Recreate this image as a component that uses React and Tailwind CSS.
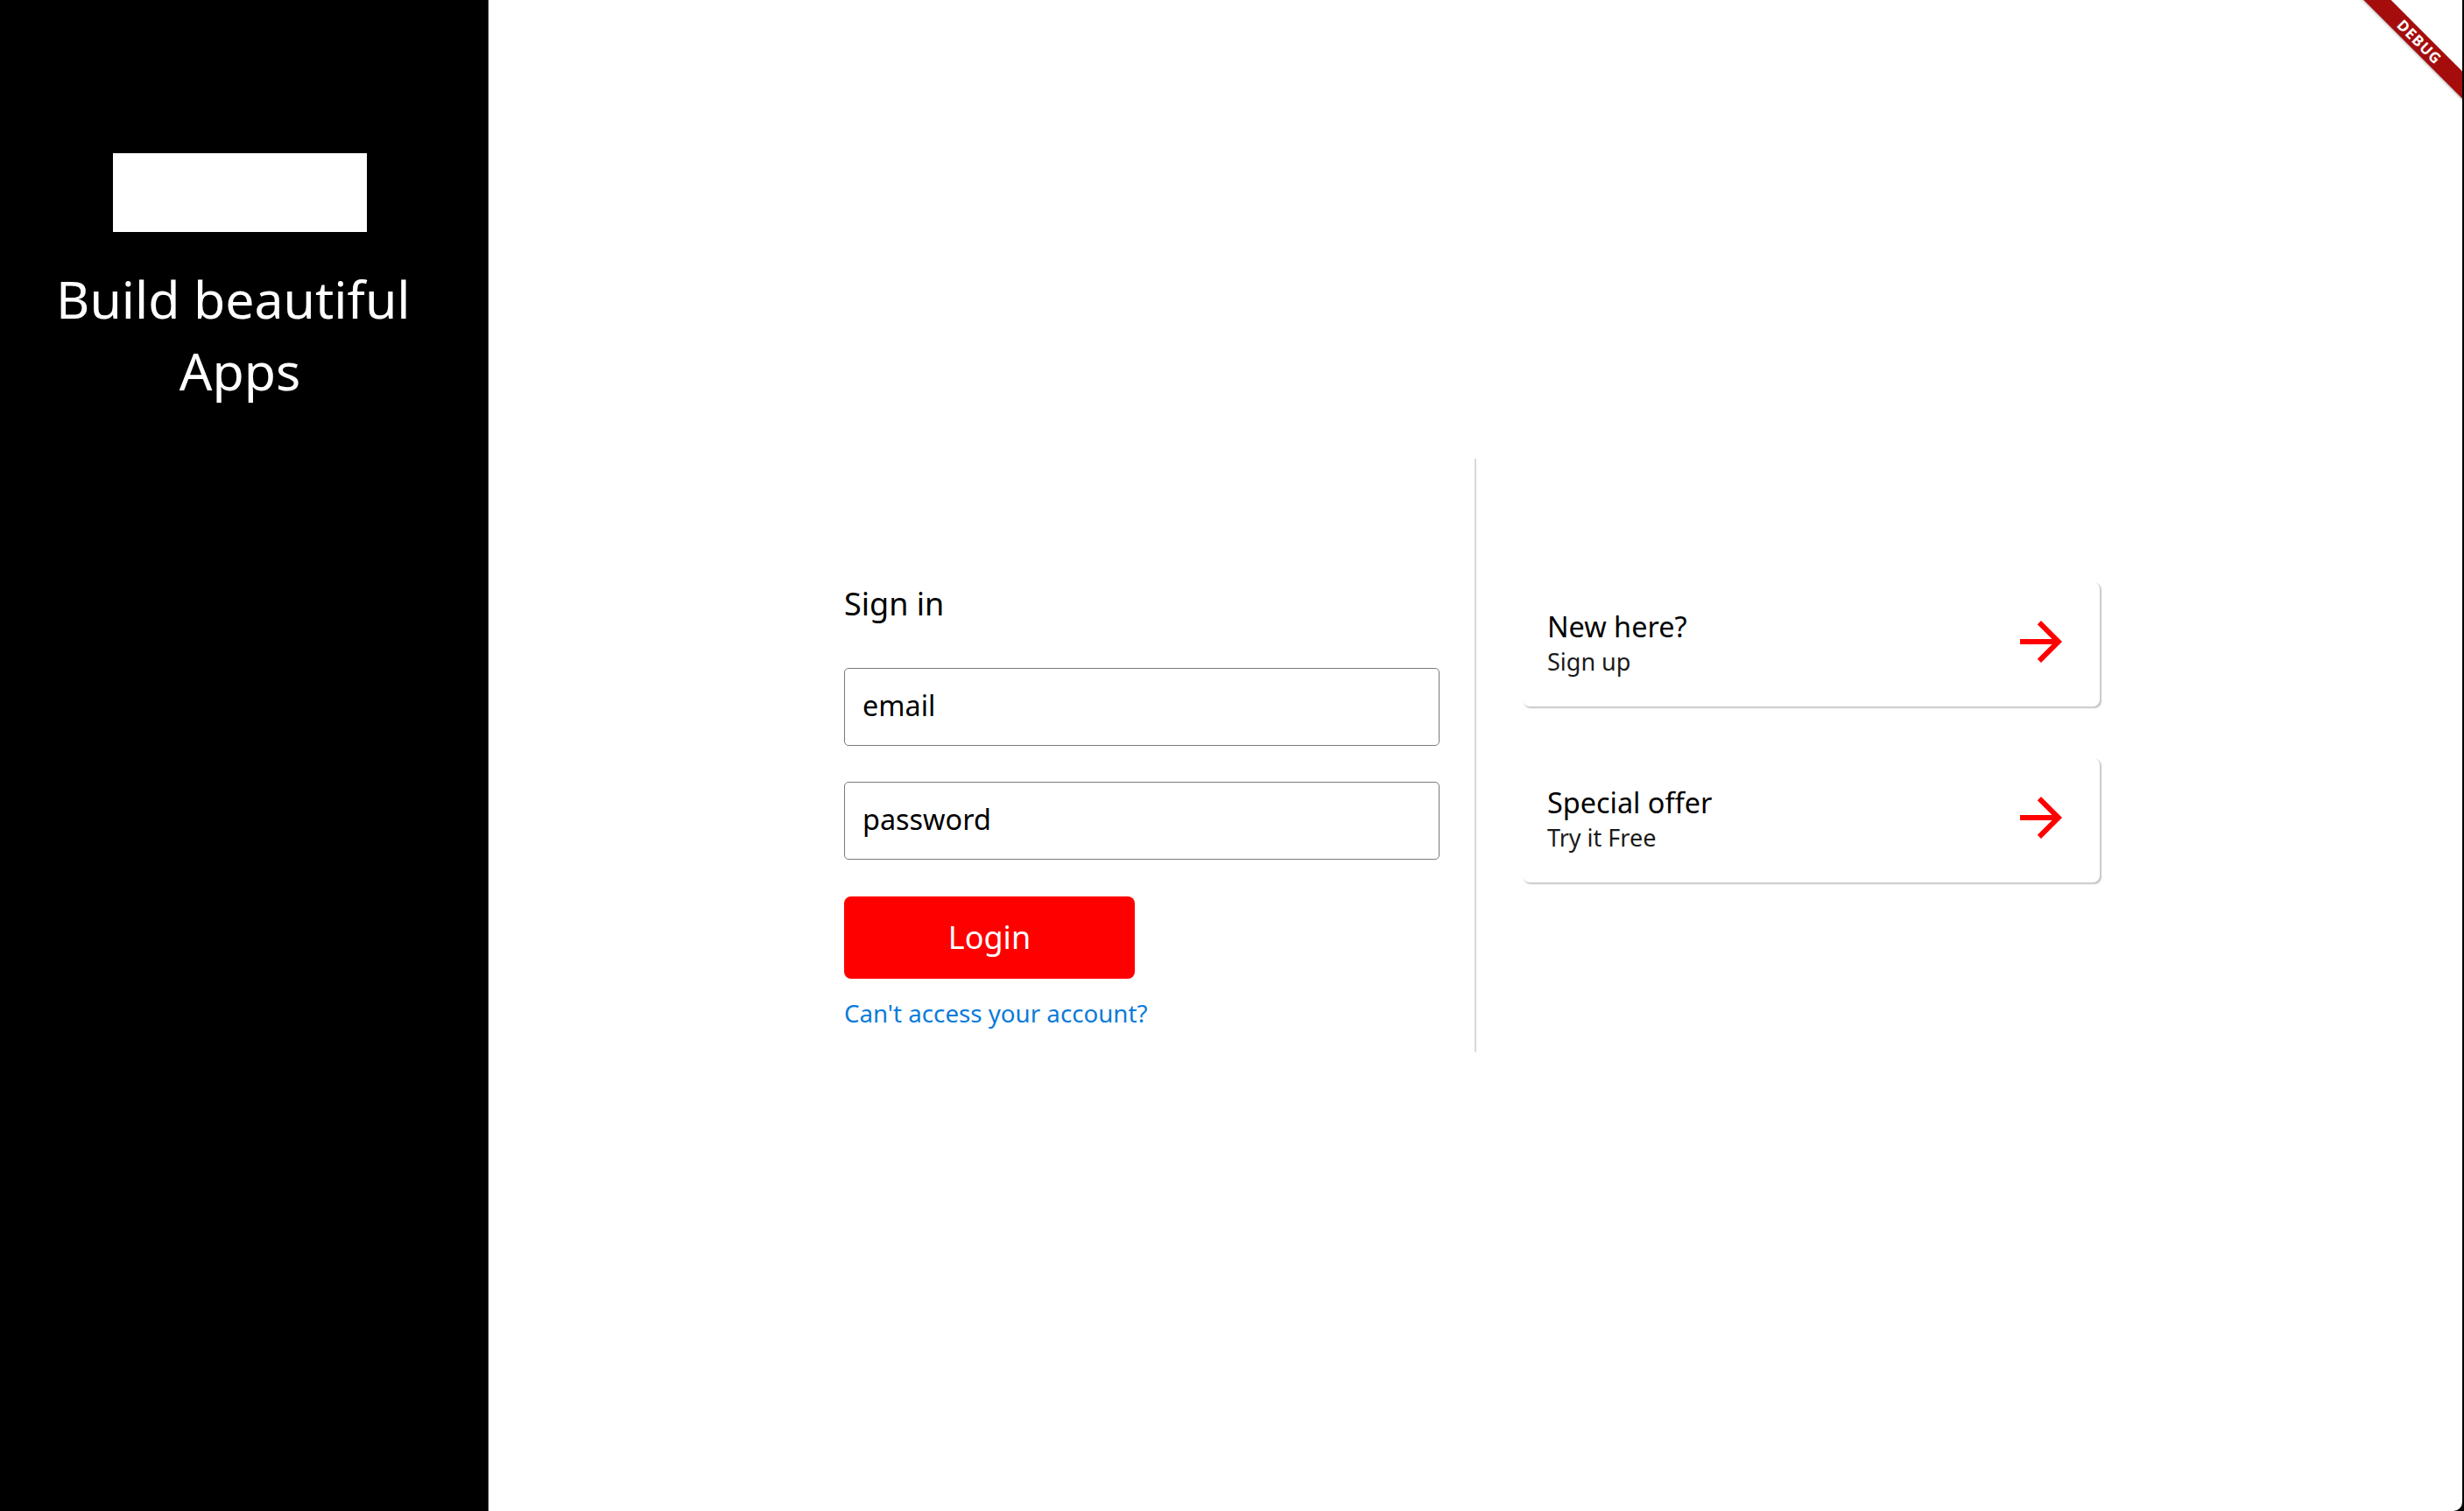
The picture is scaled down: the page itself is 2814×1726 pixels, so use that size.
import { useState } from 'react';

function ArrowForward() {
  return (
    <svg viewBox="0 0 24 24" className="h-[72px] w-[72px] shrink-0" fill="#ff0000">
      <path d="M12 4l-1.41 1.41L16.17 11H4v2h12.17l-5.58 5.59L12 20l8-8z" />
    </svg>
  );
}

function LinkCard({ title, subtitle }) {
  return (
    <button className="flex h-[142px] w-full items-center justify-between rounded-[8px] bg-white pb-[6px] pl-[28px] pr-[31px] text-left shadow-[1.5px_1.5px_1.5px_rgba(0,0,0,0.22)]">
      <div className="flex flex-col">
        <span className="text-[32.4px] leading-[44px] text-black">{title}</span>
        <span className="text-[27px] leading-[37px] text-[#1a1a1a]">{subtitle}</span>
      </div>
      <ArrowForward />
    </button>
  );
}

export default function App() {
  const [email, setEmail] = useState('');
  const [password, setPassword] = useState('');

  return (
    <div className="flex h-[1726px] w-full bg-black font-['Noto_Sans',sans-serif]">
      <aside className="flex w-[558px] shrink-0 flex-col items-center border-r border-[#3a3a3a] pr-[9px] pt-[175px]">
        <div className="h-[90px] w-[290px] bg-white" />
        <h1 className="mt-[35px] text-center text-[59px] font-normal leading-[82px] text-white">
          Build beautiful&nbsp;
          <br />
          Apps
        </h1>
      </aside>

      <main className="relative mr-[2px] flex flex-1 items-center justify-center overflow-hidden rounded-br-[10px] bg-white pr-[8px]">
        <div className="flex h-[678px]">
          <div className="flex w-[680px] flex-col items-start pt-[141px]">
            <h2 className="text-[36px] font-normal leading-[49px] text-black">Sign in</h2>
            <input
              value={email}
              onChange={(e) => setEmail(e.target.value)}
              placeholder="email"
              className="mt-[49px] h-[89px] w-full rounded-[5px] border-[1.5px] border-[#7a7a7a] px-[20px] pb-[5px] text-[32.4px] text-black outline-none placeholder:text-black"
            />
            <input
              type="password"
              value={password}
              onChange={(e) => setPassword(e.target.value)}
              placeholder="password"
              className="mt-[41px] h-[89px] w-full rounded-[5px] border-[1.5px] border-[#7a7a7a] px-[20px] pb-[5px] text-[32.4px] text-black outline-none placeholder:text-black"
            />
            <button className="mt-[42px] h-[94px] w-[332px] rounded-[8px] bg-[#ff0000] text-[36px] text-white">
              Login
            </button>
            <a href="#" className="mt-[20px] text-[27.7px] leading-[38px] text-[#0a7bd9]">
              Can't access your account?
            </a>
          </div>

          <div className="ml-[40px] w-[2px] bg-[#d9d9d9]" />

          <div className="ml-[53px] flex w-[659px] flex-col gap-[59px] pt-[141px]">
            <LinkCard title="New here?" subtitle="Sign up" />
            <LinkCard title="Special offer" subtitle="Try it Free" />
          </div>
        </div>

        <div className="absolute right-[-51px] top-[37px] flex h-[22px] w-[200px] rotate-45 items-center justify-center bg-[#a50d0d] text-[17px] font-bold tracking-[1px] text-white shadow-[0_1px_3px_rgba(0,0,0,0.3)]">
          DEBUG
        </div>
      </main>
    </div>
  );
}
